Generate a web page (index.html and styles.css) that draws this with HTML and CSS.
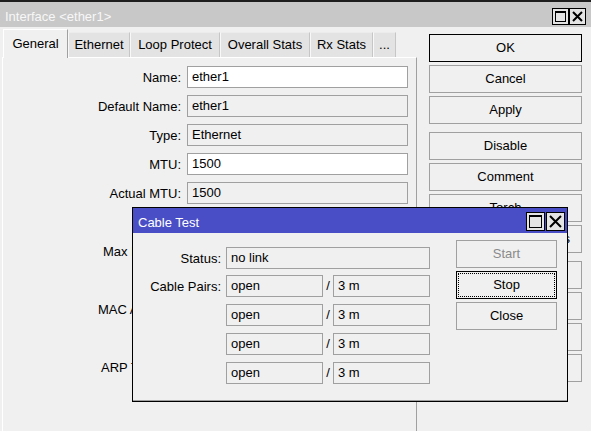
FILE: index.html
```html
<!DOCTYPE html>
<html>
<head>
<meta charset="utf-8">
<link rel="stylesheet" href="styles.css">
</head>
<body>
<div class="win">
  <div class="titlebar">
    <span class="title">Interface &lt;ether1&gt;</span>
    <div class="wbtns">
      <span class="wbtn"><svg width="15" height="15" viewBox="0 0 15 15"><rect x="2.5" y="2.5" width="10" height="10" fill="none" stroke="#000" stroke-width="1"/><rect x="2" y="2" width="11" height="2" fill="#000"/></svg></span>
      <span class="wbtn"><svg width="15" height="15" viewBox="0 0 15 15"><path d="M3 3 L12 12 M12 3 L3 12" stroke="#000" stroke-width="2"/></svg></span>
    </div>
  </div>
  <div class="main">
    <div class="left">
      <div class="tabs">
        <div class="tab active w-general">General</div>
        <div class="tab w-ethernet">Ethernet</div>
        <div class="tab w-loop">Loop Protect</div>
        <div class="tab w-overall">Overall Stats</div>
        <div class="tab w-rx">Rx Stats</div>
        <div class="tab w-more">...</div>
      </div>
      <div class="panel">
        <div class="row"><label>Name:</label><div class="field edit">ether1</div></div>
        <div class="row"><label>Default Name:</label><div class="field">ether1</div></div>
        <div class="row"><label>Type:</label><div class="field">Ethernet</div></div>
        <div class="row"><label>MTU:</label><div class="field edit">1500</div></div>
        <div class="row"><label>Actual MTU:</label><div class="field">1500</div></div>
        <div class="row"><label></label><div class="field"></div></div>
        <div class="row"><label>Max L2 MTU:</label><div class="field"></div></div>
        <div class="row"><label></label><div class="field"></div></div>
        <div class="row"><label>MAC Address:</label><div class="field edit"></div></div>
        <div class="row"><label></label><div class="field edit"></div></div>
        <div class="row"><label>ARP Timeout:</label><div class="field edit"></div></div>
      </div>
    </div>
    <div class="actions">
      <div class="btn default">OK</div>
      <div class="btn">Cancel</div>
      <div class="btn">Apply</div>
      <div class="btn sep">Disable</div>
      <div class="btn">Comment</div>
      <div class="btn">Torch</div>
      <div class="btn">Reset Traffic Counters</div>
      <div class="btn sep"></div>
      <div class="btn"></div>
      <div class="btn"></div>
      <div class="btn"></div>
    </div>
  </div>
</div>

<div class="dialog">
  <div class="dtitle">
    <span class="dtext">Cable Test</span>
    <div class="dwbtns">
      <span class="dwbtn"><svg width="17" height="17" viewBox="0 0 17 17"><rect x="2.5" y="2.5" width="12" height="12" fill="none" stroke="#000" stroke-width="1"/><rect x="2" y="2" width="13" height="2" fill="#000"/></svg></span>
      <span class="dwbtn"><svg width="17" height="17" viewBox="0 0 17 17"><path d="M3 3 L14 14 M14 3 L3 14" stroke="#000" stroke-width="2"/></svg></span>
    </div>
  </div>
  <div class="dbody">
    <div class="dleft">
      <div class="drow status"><span class="dlabel">Status:</span><div class="dfield wide">no link</div></div>
      <div class="drow"><span class="dlabel">Cable Pairs:</span><div class="dfield half">open</div><span class="slash">/</span><div class="dfield half">3 m</div></div>
      <div class="drow"><span class="dlabel"></span><div class="dfield half">open</div><span class="slash">/</span><div class="dfield half">3 m</div></div>
      <div class="drow"><span class="dlabel"></span><div class="dfield half">open</div><span class="slash">/</span><div class="dfield half">3 m</div></div>
      <div class="drow"><span class="dlabel"></span><div class="dfield half">open</div><span class="slash">/</span><div class="dfield half">3 m</div></div>
    </div>
    <div class="dright">
      <div class="dbtn disabled">Start</div>
      <div class="dbtn focused">Stop</div>
      <div class="dbtn">Close</div>
    </div>
  </div>
</div>
</body>
</html>
```
FILE: styles.css
```css
* { box-sizing: border-box; }

html, body {
  margin: 0;
  padding: 0;
}

body {
  width: 591px;
  height: 431px;
  overflow: hidden;
  background: #f0f0f0;
  font-family: "Liberation Sans", Arial, sans-serif;
  font-size: 13px;
  color: #000;
  position: relative;
}

.win {
  border-top: 2px solid #1e1e1e;
  height: 431px;
  display: flex;
  flex-direction: column;
}

.titlebar {
  height: 25px;
  flex: none;
  background: #c8c8c8;
  display: flex;
  align-items: center;
  justify-content: space-between;
  padding: 3px 5px 0 5px;
}

.title {
  color: #f7f7f7;
}

.wbtns {
  display: flex;
  align-self: flex-start;
  margin-top: 3px;
}

.wbtn {
  display: block;
  width: 17px;
  height: 17px;
  border: 1px solid #000;
  background: #e4e4e4;
}

.wbtn svg, .dwbtn svg { display: block; }

.main {
  display: flex;
  flex: 1;
  min-height: 0;
}

.left {
  width: 417px;
  padding-left: 2px;
  display: flex;
  flex-direction: column;
}

.tabs {
  height: 30px;
  display: flex;
  align-items: flex-end;
  padding-left: 1px;
  flex: none;
}

.tab {
  height: 25px;
  line-height: 24px;
  text-align: center;
  background: #e3e3e3;
  border-top: 1px solid #ececec;
  border-left: 1px solid #f8f8f8;
  border-right: 1px solid #c6c6c6;
  white-space: nowrap;
}

.tab.active {
  height: 29px;
  line-height: 27px;
  background: #f0f0f0;
  border-top: 1px solid #fff;
  border-left: 1px solid #fff;
  border-right: 1px solid #a0a0a0;
  margin-bottom: -1px;
  position: relative;
  z-index: 1;
}

.w-general { width: 65px; }
.w-ethernet { width: 62px; }
.w-loop { width: 90px; }
.w-overall { width: 90px; }
.w-rx { width: 63px; }
.w-more { width: 23px; }

.panel {
  flex: 1;
  border-top: 1px solid #fff;
  border-left: 1px solid #fff;
  border-right: 1px solid #a0a0a0;
  padding-top: 8px;
}

.row {
  display: flex;
  align-items: center;
  height: 22px;
  margin-bottom: 7px;
}

.row label {
  width: 178px;
  margin-right: 6px;
  text-align: right;
  white-space: nowrap;
}

.field {
  width: 221px;
  height: 22px;
  border: 1px solid #a0a0a0;
  background: #f0f0f0;
  padding-left: 4px;
  line-height: 20px;
  white-space: nowrap;
}

.field.edit { background: #fff; }

.actions {
  margin-left: 12px;
  width: 153px;
  padding-top: 7px;
  display: flex;
  flex-direction: column;
}

.btn {
  height: 28px;
  flex: none;
  border: 1px solid #a0a0a0;
  background: #f0f0f0;
  text-align: center;
  line-height: 26px;
  margin-bottom: 3px;
  white-space: nowrap;
}

.btn.sep { margin-top: 5px; }
.btn.default { border-color: #000; }

/* dialog */
.dialog {
  position: absolute;
  left: 132px;
  top: 207px;
  width: 436px;
  height: 195px;
  border: 1px solid #000;
  background: #f0f0f0;
  box-shadow: inset 0 -1px 0 #a0a0a0;
  display: flex;
  flex-direction: column;
  z-index: 5;
}

.dtitle {
  height: 25px;
  flex: none;
  background: #4a4ec6;
  display: flex;
  align-items: center;
  justify-content: space-between;
  padding: 3px 2px 0 5px;
}

.dtext { color: #fff; }

.dwbtns {
  display: flex;
  align-self: flex-start;
  gap: 1px;
  margin-top: 1px;
}

.dwbtn {
  display: block;
  width: 19px;
  height: 19px;
  border: 1px solid #000;
  background: #e4e4e4;
}

.dbody {
  display: flex;
  flex: 1;
}

.dleft {
  width: 323px;
  padding-top: 14px;
}

.drow {
  display: flex;
  align-items: center;
  height: 22px;
  margin-bottom: 7px;
}

.drow.status { margin-bottom: 6px; }

.dlabel {
  width: 88px;
  margin-right: 5px;
  text-align: right;
  white-space: nowrap;
}

.dfield {
  height: 22px;
  border: 1px solid #a0a0a0;
  padding-left: 4px;
  line-height: 20px;
  white-space: nowrap;
}

.dfield.wide { width: 204px; }
.dfield.half { width: 97px; }

.slash {
  width: 10px;
  text-align: center;
  line-height: 20px;
}

.dright {
  width: 101px;
  padding-top: 7px;
}

.dbtn {
  height: 28px;
  border: 1px solid #a0a0a0;
  text-align: center;
  line-height: 26px;
  margin-bottom: 3px;
}

.dbtn.disabled { color: #8a8a8a; }

.dbtn.focused {
  border-color: #000;
  outline: 1px dotted #000;
  outline-offset: -3px;
}
```
